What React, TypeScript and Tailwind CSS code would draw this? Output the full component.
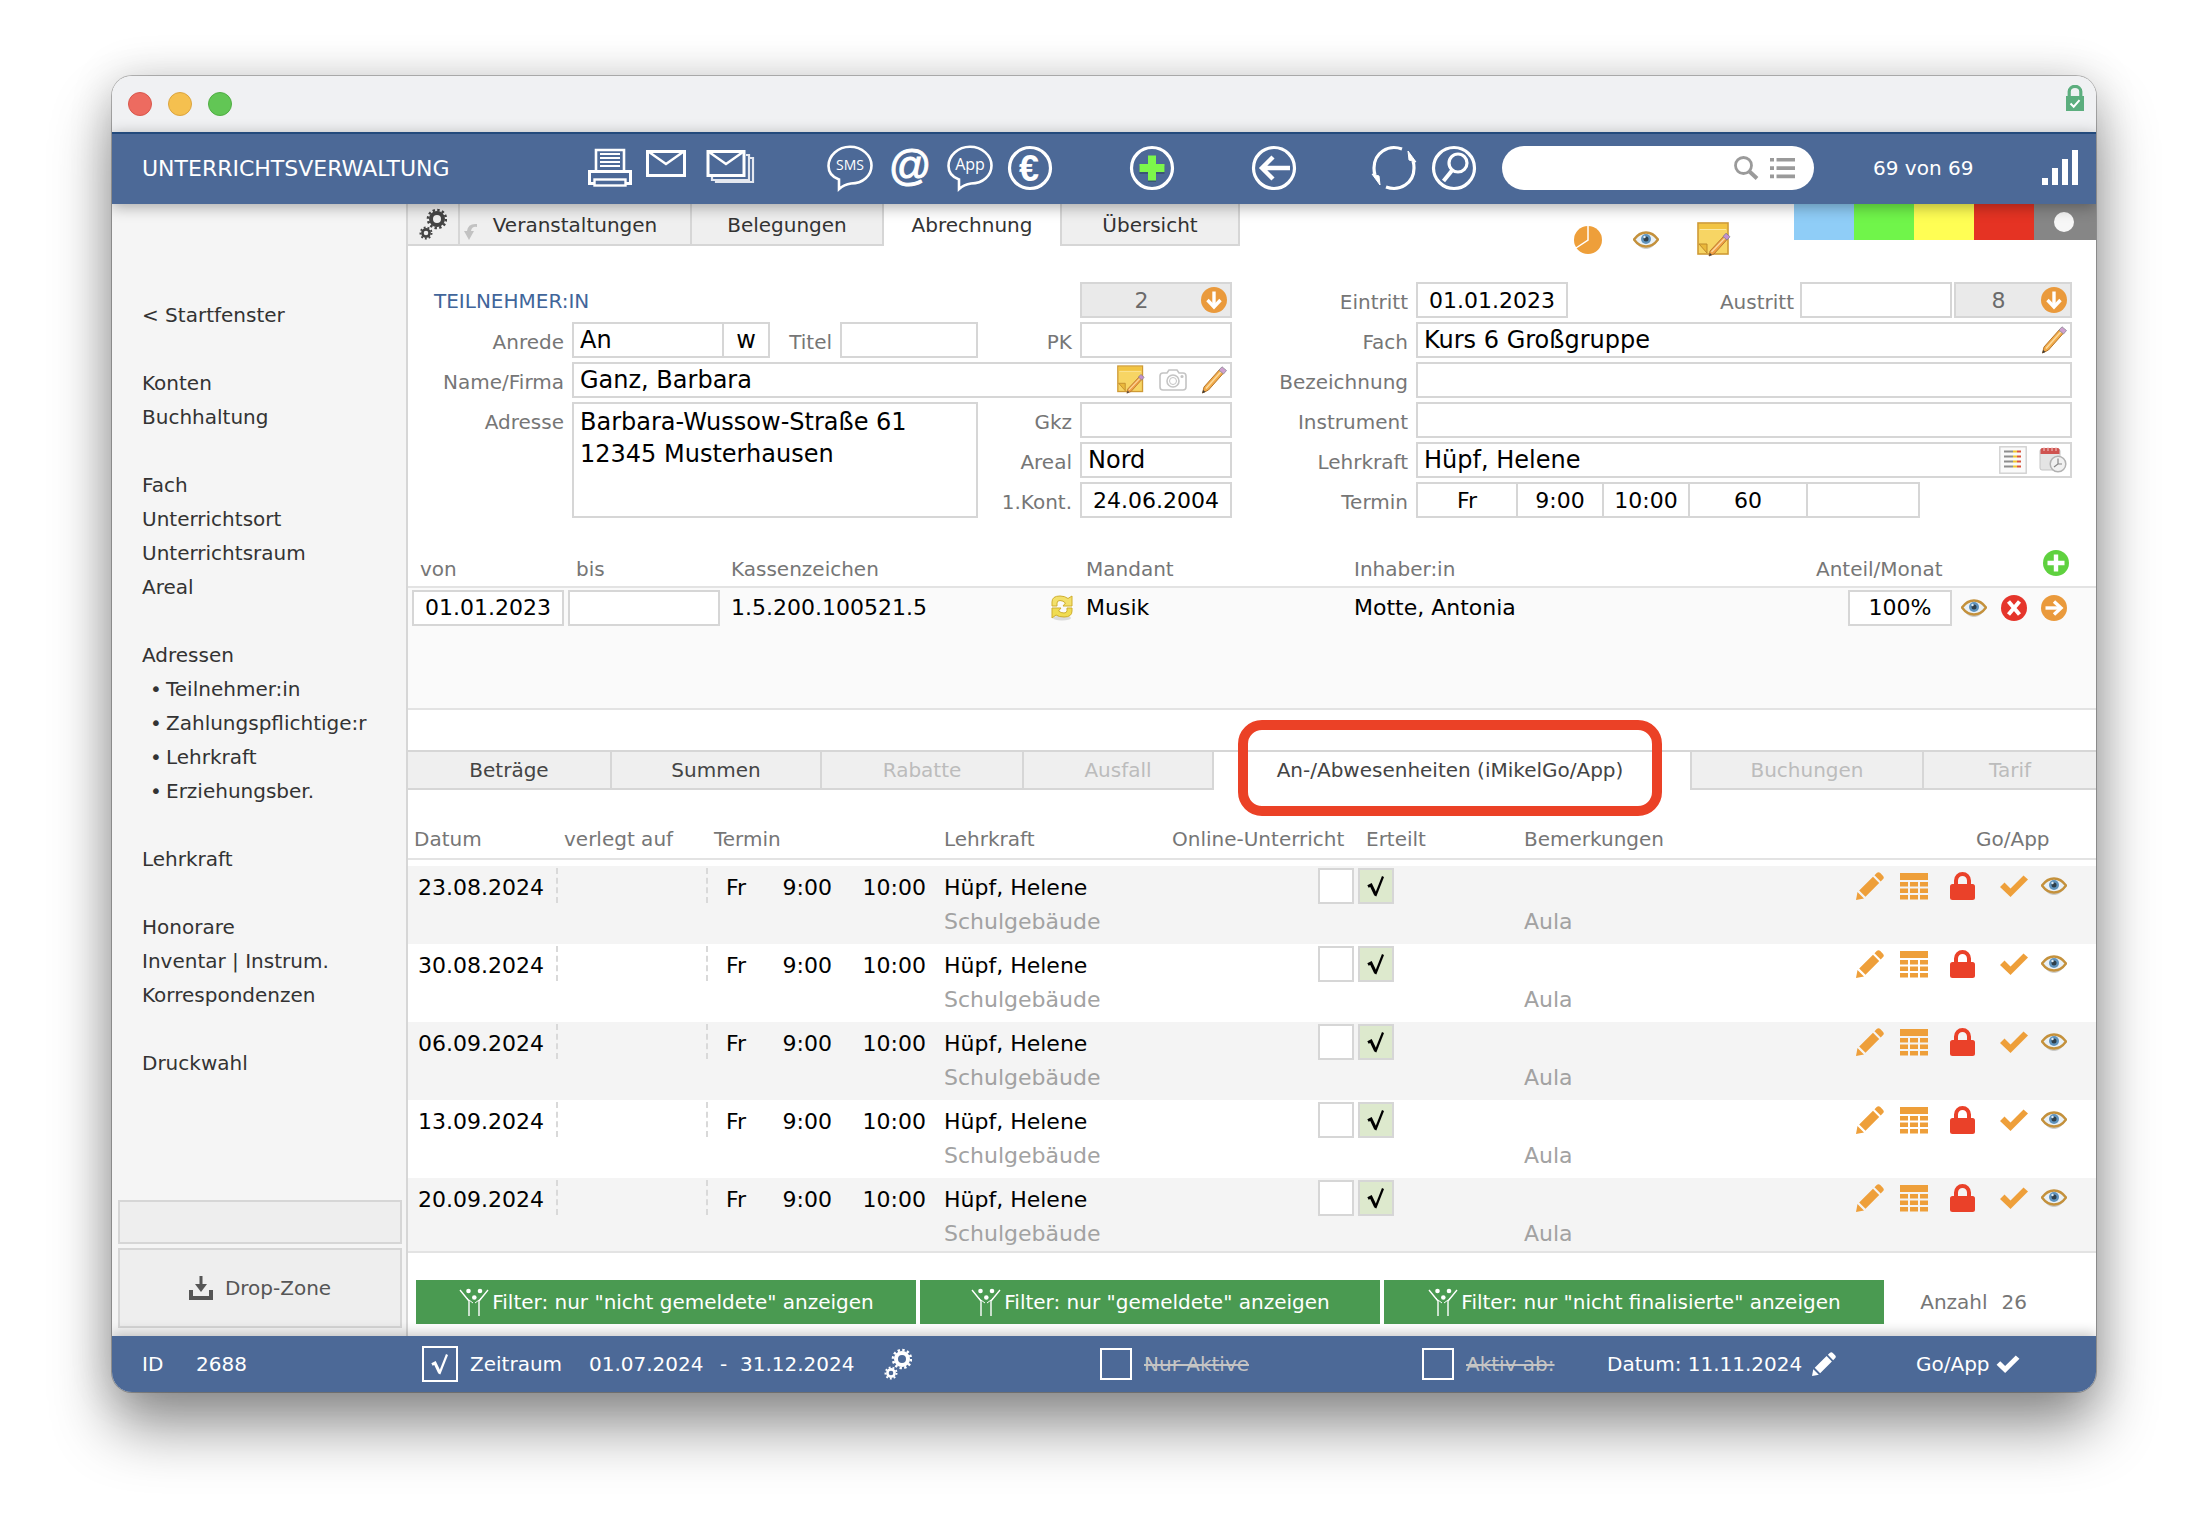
import React from 'react';

const ORANGE = '#ee9f3a';

/* ---------- small drawings ---------- */

function Gears({ color, className }: { color: string; className: string }) {
  return (
    <svg viewBox="0 0 28 34" className={className} fill="none" stroke={color} aria-hidden="true">
      <circle cx="18" cy="12" r="6" strokeWidth="4" />
      <circle cx="18" cy="12" r="9" strokeWidth="2.6" strokeDasharray="2.4 2.31" />
      <circle cx="7" cy="26" r="3.6" strokeWidth="2.6" />
      <circle cx="7" cy="26" r="5.6" strokeWidth="1.8" strokeDasharray="1.9 2" />
    </svg>
  );
}

function Eye() {
  return (
    <svg viewBox="0 0 26 18" className="h-[18px] w-[26px]" aria-hidden="true">
      <path d="M1 9.500C5 4 9 2 13 2s8 2 12 7.500C21 15.500 17 18 13 18S5 15.500 1 9.500z" fill="#9a9a94" opacity=".45" />
      <path d="M1 8.500C5 3 9 1.500 13 1.500s8 1.500 12 7C21 14 17 15.500 13 15.500S5 14 1 8.500z" fill="#e9f1f7" stroke="#c4913c" strokeWidth="2.400" />
      <circle cx="13" cy="8" r="5" fill="#5f93bd" />
      <circle cx="13" cy="8" r="2.500" fill="#2f3f4a" />
      <circle cx="11.500" cy="6" r="1.200" fill="#dcebf5" />
    </svg>
  );
}

function NotePencil({ className }: { className: string }) {
  return (
    <svg viewBox="0 0 34 36" className={className} aria-hidden="true">
      <rect x="1" y="1" width="30" height="31" fill="#f7d564" stroke="#cf9a35" strokeWidth="1.600" />
      <rect x="2" y="2" width="28" height="5" fill="#f2c443" />
      <path d="M3 7.500h26" stroke="#fbe9a2" />
      <path d="M2 22h8v9z" fill="#eab83b" stroke="#bf8a2b" />
      <path d="M13 29l14-15 3.500 3L17 32l-5 2z" fill="#f0a044" stroke="#a9682a" strokeWidth=".8" />
      <path d="M14.500 30L28.500 15.500" stroke="#fbd9a2" strokeWidth="1.300" />
      <path d="M26 14.500l3-3.300 4 3.500-3 3.300z" fill="#c38fd0" stroke="#7f7f8a" strokeWidth=".8" />
      <path d="M12 34l1-3 2 2z" fill="#444" />
    </svg>
  );
}

function ColorPencil() {
  return (
    <svg viewBox="0 0 26 28" className="h-7 w-[26px]" aria-hidden="true">
      <path d="M3 21L19 3l4 3.500L7.500 24 1.500 27z" fill="#f2ab4a" stroke="#b5762c" />
      <path d="M5 22.500L21 4.500" stroke="#fbdca0" strokeWidth="1.500" />
      <path d="M18 4l3-3.200 4.500 3.700L22.500 8z" fill="#cfa0cf" stroke="#8b8b94" strokeWidth=".8" />
      <path d="M1.200 27.200l1-3.200 2.300 2z" fill="#3c3c3c" />
    </svg>
  );
}

function Camera() {
  return (
    <svg viewBox="0 0 28 22" className="h-[22px] w-7" fill="none" stroke="#c4c4c4" strokeWidth="1.600" aria-hidden="true">
      <path d="M4 4h4l2-3h8l2 3h4q3 0 3 3v11q0 3-3 3H4q-3 0-3-3V7q0-3 3-3z" />
      <circle cx="14" cy="12" r="6" />
      <circle cx="14" cy="12" r="3.500" strokeWidth="1" />
      <circle cx="23" cy="7.500" r=".8" />
    </svg>
  );
}

function CircleArrow({ dir }: { dir: 'down' | 'right' }) {
  return (
    <svg viewBox="0 0 26 26" className="size-[26px]" aria-hidden="true">
      <circle cx="13" cy="13" r="13" fill="#ea9a3c" />
      <g transform={dir === 'right' ? 'rotate(-90 13 13)' : undefined} fill="none" stroke="#fff" strokeWidth="3.400">
        <path d="M13 4.500v15" />
        <path d="M6.500 13l6.500 7 6.500-7" />
      </g>
    </svg>
  );
}

function CirclePlus() {
  return (
    <svg viewBox="0 0 26 26" className="size-[26px]" aria-hidden="true">
      <circle cx="13" cy="13" r="13" fill="#5fd13f" />
      <path d="M13 4.500v17M4.500 13h17" stroke="#fff" strokeWidth="4.400" />
    </svg>
  );
}

function CircleX() {
  return (
    <svg viewBox="0 0 26 26" className="size-[26px]" aria-hidden="true">
      <circle cx="13" cy="13" r="13" fill="#e5352b" />
      <path d="M7.500 6.500l11 13M18.500 6.500l-11 13" stroke="#fff" strokeWidth="4" />
    </svg>
  );
}

function SyncGold() {
  return (
    <svg viewBox="0 0 24 26" className="h-[26px] w-6" aria-hidden="true">
      <ellipse cx="12" cy="23" rx="9" ry="2.500" fill="#bbb" opacity=".5" />
      <path d="M2 11V7q0-6 8-6 5 0 8 2.500L22 1v10h-9l2.500-3Q13 5.500 10 5.500 7 5.500 7 8v3z" fill="#f3e06a" stroke="#cfae2e" />
      <path d="M22 13v3q0 6-8 6-5 0-8-2L2 23V13h9l-2.500 3Q11 18 14 18q3 0 3-2.500V13z" fill="#f0dc52" stroke="#cfae2e" />
    </svg>
  );
}

function ListDoc() {
  return (
    <svg viewBox="0 0 28 28" className="size-7" aria-hidden="true">
      <rect x=".8" y=".8" width="26.400" height="26.400" fill="#fafafa" stroke="#d0d0d0" strokeWidth="1.400" />
      {[5.5, 10.5, 15.5, 20.5].map((y) => (
        <g key={y} strokeWidth="2">
          <path d={`M5 ${y}h9`} stroke="#8d8d8d" />
          <path d={`M14 ${y}h4`} stroke="#f0c833" />
          <path d={`M18 ${y}h4`} stroke="#d9543c" />
        </g>
      ))}
    </svg>
  );
}

function CalendarClock() {
  return (
    <svg viewBox="0 0 28 26" className="h-[26px] w-7" aria-hidden="true">
      <rect x="1" y="2" width="20" height="21" rx="2" fill="#e4e4e4" stroke="#c4c4c4" />
      <path d="M1.500 7V3q0-2 2-2h15q2 0 2 2v4z" fill="#cf5350" />
      <path d="M5 0v4M9 0v4M13 0v4M17 0v4" stroke="#f3c9c7" strokeWidth="1" />
      <circle cx="19" cy="17" r="7.800" fill="#f1f1f1" stroke="#b2b2b2" strokeWidth="1.500" />
      <path d="M19 11.500V17l-4 3M19 17h4" fill="none" stroke="#888" strokeWidth="1.200" />
    </svg>
  );
}

function Pencil({ color, className }: { color: string; className: string }) {
  return (
    <svg viewBox="0 0 28 28" className={className} fill={color} aria-hidden="true">
      <path d="M0 28l1.500-8 6.500 6.500zM3.200 18.500L17 4.800l6.200 6.200L9.500 24.800zM18.500 3.300l2.200-2.200q1.800-1.800 3.600 0l2.600 2.600q1.800 1.800 0 3.600l-2.200 2.200z" />
    </svg>
  );
}

function TableIcon() {
  return (
    <svg viewBox="0 0 28 27" className="h-[27px] w-7" fill={ORANGE} aria-hidden="true">
      <rect width="28" height="7" />
      {[9, 15.5, 22].map((y) => (
        <g key={y}>
          <rect x="0" y={y} width="8" height="4.500" />
          <rect x="10" y={y} width="8" height="4.500" />
          <rect x="20" y={y} width="8" height="4.500" />
        </g>
      ))}
    </svg>
  );
}

function Lock() {
  return (
    <svg viewBox="0 0 25 28" className="h-7 w-[25px]" aria-hidden="true">
      <path d="M6 14V8.500a6.500 6.500 0 0 1 13 0V14" fill="none" stroke="#ea4129" strokeWidth="4" />
      <rect y="12" width="25" height="16" rx="2.500" fill="#ea4129" />
    </svg>
  );
}

function Tick({ color, className }: { color: string; className: string }) {
  return (
    <svg viewBox="0 0 28 22" className={className} fill={color} aria-hidden="true">
      <path d="M0 12l4.500-4.500 6 6L23.500.5l4.500 4L10.500 22z" />
    </svg>
  );
}

function People() {
  return (
    <svg viewBox="0 0 32 30" className="h-[30px] w-8" fill="none" stroke="#fff" strokeWidth="1.400" aria-hidden="true">
      <path d="M2 3l9 11v15M30 3l-9 11v15" />
      <path d="M11 14l-2-3M21 14l2-3M11 13l4 3M21 13l-4 3" strokeWidth="1" />
      <g fill="#fff" stroke="none">
        <circle cx="10.500" cy="4" r="2.300" />
        <circle cx="22" cy="4" r="2.300" />
        <circle cx="16.300" cy="10.500" r="2.300" />
      </g>
    </svg>
  );
}

function RootCheck({ color }: { color: string }) {
  return (
    <svg viewBox="0 0 20 22" className="pointer-events-none z-10 h-[22px] w-5 place-self-center [grid-area:1/1]" fill="none" stroke={color} aria-hidden="true">
      <path d="M2 11.500l3-1.500 4.500 9.500" strokeWidth="3" />
      <path d="M9.300 21L17 1.500" strokeWidth="2.200" />
    </svg>
  );
}

/* ---------- toolbar ---------- */

function ToolButton({ label, children }: { label: string; children: React.ReactNode }) {
  return (
    <button type="button" aria-label={label} title={label} className="h-12 w-[60px] shrink-0">
      <svg viewBox="0 0 60 48" className="h-12 w-[60px] overflow-visible" fill="none" stroke="#fff" strokeWidth="3.200">
        {children}
      </svg>
    </button>
  );
}

const BUBBLE = 'M19 45V35.500C12 33 8.500 28 8.500 22C8.500 11.500 18 2.700 30 2.700S51.500 11.500 51.500 21.500S43 39.500 31 39.500Q24 40.500 19 45z';

function Toolbar() {
  return (
    <header className="relative z-20 flex h-[72px] items-center bg-[#4c6997] pl-[30px] pr-[18px] text-white shadow-[inset_0_2px_0_#234a7c,0_3px_14px_rgba(0,0,0,0.32)]">
      <h1 className="w-[438px] shrink-0 text-[22px]">UNTERRICHTSVERWALTUNG</h1>
      <ToolButton label="Drucken">
        <path d="M16 26V6h28v20" strokeWidth="2.600" />
        <path d="M20 10h20M20 14h20M20 18h20M20 22h20" strokeWidth="1.800" />
        <path d="M14 39.500H9.500V27.500h41v12H46" strokeWidth="3" />
        <rect x="14.500" y="35.500" width="31" height="6" strokeWidth="2.400" />
      </ToolButton>
      <ToolButton label="E-Mail">
        <rect x="7.500" y="7.500" width="37" height="24" strokeWidth="3" />
        <path d="M9 8l17 12L43 8" strokeWidth="2.400" />
      </ToolButton>
      <ToolButton label="Serien-E-Mail">
        <path d="M46 11h3v25H12v-3M49 14h4v24H16v-3" strokeWidth="2.200" opacity=".85" />
        <rect x="8" y="7.500" width="36" height="24" strokeWidth="3" />
        <path d="M9 8l17 12L43 8" strokeWidth="2.400" />
      </ToolButton>
      <div className="w-[60px] shrink-0" />
      <ToolButton label="SMS">
        <path d={BUBBLE} strokeWidth="2.600" />
        <text x="30" y="26" textAnchor="middle" fill="#fff" stroke="none" fontSize="14" fontFamily="Open Sans, sans-serif">SMS</text>
      </ToolButton>
      <ToolButton label="Nachricht">
        <text x="30" y="36" textAnchor="middle" fill="#fff" stroke="#fff" strokeWidth="1" fontSize="42" fontFamily="Liberation Sans, sans-serif">@</text>
      </ToolButton>
      <ToolButton label="App">
        <path d={BUBBLE} strokeWidth="2.600" />
        <text x="30" y="26" textAnchor="middle" fill="#fff" stroke="none" fontSize="16" fontFamily="Open Sans, sans-serif">App</text>
      </ToolButton>
      <ToolButton label="Zahlungen">
        <circle cx="30" cy="24" r="20.500" />
        <text x="29" y="36.500" textAnchor="middle" fill="#fff" stroke="none" fontSize="36" fontWeight="700" fontFamily="Liberation Sans, sans-serif">€</text>
      </ToolButton>
      <div className="w-[62px] shrink-0" />
      <ToolButton label="Neu">
        <circle cx="30" cy="24" r="20.500" />
        <path d="M30 13v25M17.500 26h25" stroke="#2f4a5e" strokeWidth="8" opacity=".6" />
        <path d="M30 11.500v25M17.500 24h25" stroke="#7cf74b" strokeWidth="8" />
      </ToolButton>
      <div className="w-[62px] shrink-0" />
      <ToolButton label="Zurück">
        <circle cx="30" cy="24" r="20.500" />
        <path d="M46 24H17M29 13L18 24l11 11" strokeWidth="4.400" />
      </ToolButton>
      <div className="w-[60px] shrink-0" />
      <ToolButton label="Aktualisieren">
        <path d="M38 5C24 0 10 9 10 24Q10 28 11 31M22 43C36 48 50 39 50 24Q50 20 49 17" />
        <path d="M8 30l7 2 1 9zM52 18l-7-2-1-9z" fill="#fff" strokeWidth="1" />
      </ToolButton>
      <ToolButton label="Suchen">
        <circle cx="30" cy="24" r="20.500" />
        <circle cx="34" cy="19" r="9" />
        <path d="M28 26.500L19.500 37" strokeWidth="4" />
      </ToolButton>
      <div className="ml-[18px] flex h-11 min-w-[120px] flex-1 items-center rounded-full bg-white pl-5 pr-[19px]">
        <input type="search" aria-label="Schnellsuche" className="min-w-0 flex-1 bg-transparent text-[20px] text-black outline-none" />
        <button type="button" aria-label="Suche starten">
          <svg viewBox="0 0 25 24" className="h-6 w-[25px]" fill="none" stroke="#9a9a9a">
            <circle cx="9.500" cy="9.500" r="8" strokeWidth="2.800" />
            <path d="M15.500 15.500l7.500 7" strokeWidth="4" />
          </svg>
        </button>
        <button type="button" aria-label="Suchliste" className="ml-[11px]">
          <svg viewBox="0 0 25 22" className="h-[22px] w-[25px]" fill="#9a9a9a">
            <path d="M0 1h4v3.600H0zM6.500 1H25v3.600H6.500zM0 9.300h4v3.600H0zM6.500 9.300H25v3.600H6.500zM0 17.600h4v3.600H0zM6.500 17.600H25v3.600H6.500z" />
          </svg>
        </button>
      </div>
      <p className="ml-[59px] w-[169px] shrink-0 text-[20px]">69 von 69</p>
      <svg viewBox="0 0 36 36" className="size-9 shrink-0" fill="#fff" aria-hidden="true">
        <path d="M0 28h6v7H0zM10 18h6v17h-6zM20 9h6v26h-6zM30 0h6v35h-6z" />
      </svg>
    </header>
  );
}

/* ---------- sidebar ---------- */

const MENU: string[][] = [
  ['< Startfenster'],
  ['Konten', 'Buchhaltung'],
  ['Fach', 'Unterrichtsort', 'Unterrichtsraum', 'Areal'],
  ['Adressen', '• Teilnehmer:in', '• Zahlungspflichtige:r', '• Lehrkraft', '• Erziehungsber.'],
  ['Lehrkraft'],
  ['Honorare', 'Inventar | Instrum.', 'Korrespondenzen'],
  ['Druckwahl'],
];

function Sidebar() {
  return (
    <aside className="flex w-[296px] shrink-0 flex-col border-r-2 border-[#d6d6d6] bg-[#f5f5f5]">
      <nav className="flex flex-col gap-[34px] pl-[30px] pt-[94px] text-[20px] leading-[34px] text-[#333]">
        {MENU.map((group) => (
          <ul key={group[0]}>
            {group.map((item) => {
              const bullet = item.startsWith('•');
              return (
                <li key={item} className={bullet ? 'flex pl-2' : ''}>
                  {bullet && <span className="w-4">•</span>}
                  <a href="#" className="whitespace-nowrap">{bullet ? item.slice(2) : item}</a>
                </li>
              );
            })}
          </ul>
        ))}
      </nav>
      <div className="mt-auto flex flex-col gap-1 px-1.5 pb-2 pr-1">
        <div className="h-11 border-2 border-[#d6d6d6] bg-[#eee]" />
        <button type="button" className="flex h-20 items-center justify-center gap-3 border-2 border-[#d6d6d6] bg-[#eee] text-[20px] text-[#555]">
          <svg viewBox="0 0 24 24" className="size-6" aria-hidden="true">
            <path d="M2 14v8h20v-8" fill="none" stroke="#555" strokeWidth="4" />
            <path d="M10.500 0h3v8H18l-6 8-6-8h4.500z" fill="#555" />
          </svg>
          Drop-Zone
        </button>
      </div>
    </aside>
  );
}

/* ---------- form ---------- */

const FRAME = 'h-9 border-2 border-[#d6d6d6] bg-white text-black outline-none';
const BOX = `${FRAME} text-[22px]`;
const TEXT_BOX = `${FRAME} text-[24px]`;

function Label({ id, className, children }: { id: string; className: string; children: string }) {
  return (
    <label htmlFor={id} className={`h-9 shrink-0 whitespace-nowrap text-right text-[20px] leading-[40px] text-[#767676] ${className}`}>
      {children}
    </label>
  );
}

function CountButton({ value, className }: { value: string; className: string }) {
  return (
    <button type="button" className={`flex h-9 shrink-0 items-center border-2 border-[#d6d6d6] bg-[#eaeaea] pr-[3px] text-[22px] text-[#6b6b6b] ${className}`}>
      <span className="flex-1">{value}</span>
      <CircleArrow dir="down" />
    </button>
  );
}

function ParticipantForm() {
  return (
    <section className="flex min-w-0 flex-col gap-1">
      <div className="flex h-9 justify-between">
        <h2 className="pl-[26px] text-[20px] leading-[38px] text-[#41659a]">TEILNEHMER:IN</h2>
        <CountButton value="2" className="w-[152px]" />
      </div>
      <div className="flex">
        <Label id="anrede" className="w-[164px] pr-2">Anrede</Label>
        <input id="anrede" defaultValue="An" className={`${TEXT_BOX} w-[150px] shrink-0 border-r-0 px-1.5`} />
        <input aria-label="Geschlecht" defaultValue="w" className={`${TEXT_BOX} w-12 shrink-0 px-0 text-center`} />
        <Label id="titel" className="w-[70px] pr-2">Titel</Label>
        <input id="titel" className={`${TEXT_BOX} min-w-0 flex-1 px-1.5`} />
        <Label id="pk" className="w-[102px] pr-2">PK</Label>
        <input id="pk" className={`${TEXT_BOX} w-[152px] shrink-0 px-1.5`} />
      </div>
      <div className="flex">
        <Label id="name" className="w-[164px] pr-2">Name/Firma</Label>
        <div className={`${TEXT_BOX} flex min-w-0 flex-1 items-center pr-[3px]`}>
          <input id="name" defaultValue="Ganz, Barbara" className="h-8 min-w-0 flex-1 px-1.5 outline-none" />
          <button type="button" aria-label="Notiz"><NotePencil className="h-[30px] w-7" /></button>
          <button type="button" aria-label="Foto" className="ml-3.5"><Camera /></button>
          <button type="button" aria-label="Name bearbeiten" className="ml-3.5"><ColorPencil /></button>
        </div>
      </div>
      <div className="flex">
        <Label id="adresse" className="w-[164px] pr-2">Adresse</Label>
        <textarea
          id="adresse"
          defaultValue={'Barbara-Wussow-Straße 61\n12345 Musterhausen'}
          className="h-[116px] min-w-0 flex-1 resize-none border-2 border-[#d6d6d6] px-1.5 py-0.5 text-[24px] leading-8 text-black outline-none"
        />
        <div className="flex flex-col gap-1">
          <div className="flex">
            <Label id="gkz" className="w-[102px] pr-2">Gkz</Label>
            <input id="gkz" className={`${TEXT_BOX} w-[152px] px-1.5`} />
          </div>
          <div className="flex">
            <Label id="areal" className="w-[102px] pr-2">Areal</Label>
            <input id="areal" defaultValue="Nord" className={`${TEXT_BOX} w-[152px] px-1.5`} />
          </div>
          <div className="flex">
            <Label id="kont" className="w-[102px] pr-2">1.Kont.</Label>
            <input id="kont" defaultValue="24.06.2004" className={`${BOX} w-[152px] text-center`} />
          </div>
        </div>
      </div>
    </section>
  );
}

const TERMIN = [
  { label: 'Wochentag', value: 'Fr', width: 'w-[102px] border-l-2' },
  { label: 'Beginn', value: '9:00', width: 'w-[86px]' },
  { label: 'Ende', value: '10:00', width: 'w-[86px]' },
  { label: 'Dauer', value: '60', width: 'w-[118px]' },
  { label: 'Zusatz', value: '', width: 'w-[112px]' },
];

function CourseForm() {
  return (
    <section className="flex min-w-0 flex-col gap-1">
      <div className="flex">
        <Label id="eintritt" className="w-[184px] pr-2">Eintritt</Label>
        <input id="eintritt" defaultValue="01.01.2023" className={`${BOX} w-[152px] text-center`} />
        <Label id="austritt" className="ml-auto pr-1.5">Austritt</Label>
        <input id="austritt" className={`${BOX} w-[152px] px-1.5`} />
        <CountButton value="8" className="ml-0.5 w-[118px]" />
      </div>
      <div className="flex">
        <Label id="fach" className="w-[184px] pr-2">Fach</Label>
        <div className={`${TEXT_BOX} flex min-w-0 flex-1 items-center pr-[3px]`}>
          <input id="fach" defaultValue="Kurs 6 Großgruppe" className="h-8 min-w-0 flex-1 px-1.5 outline-none" />
          <button type="button" aria-label="Fach bearbeiten"><ColorPencil /></button>
        </div>
      </div>
      <div className="flex">
        <Label id="bez" className="w-[184px] pr-2">Bezeichnung</Label>
        <input id="bez" className={`${TEXT_BOX} min-w-0 flex-1 px-1.5`} />
      </div>
      <div className="flex">
        <Label id="instr" className="w-[184px] pr-2">Instrument</Label>
        <input id="instr" className={`${TEXT_BOX} min-w-0 flex-1 px-1.5`} />
      </div>
      <div className="flex">
        <Label id="lehr" className="w-[184px] pr-2">Lehrkraft</Label>
        <div className={`${TEXT_BOX} flex min-w-0 flex-1 items-center pr-[3px]`}>
          <input id="lehr" defaultValue="Hüpf, Helene" className="h-8 min-w-0 flex-1 px-1.5 outline-none" />
          <button type="button" aria-label="Liste"><ListDoc /></button>
          <button type="button" aria-label="Kalender" className="ml-3"><CalendarClock /></button>
        </div>
      </div>
      <div className="flex">
        <Label id="termin0" className="w-[184px] pr-2">Termin</Label>
        {TERMIN.map((t, i) => (
          <input
            key={t.label}
            id={`termin${i}`}
            aria-label={t.label}
            defaultValue={t.value}
            className={`h-9 border-y-2 border-r-2 border-[#d6d6d6] bg-white text-center text-[22px] text-black outline-none ${t.width}`}
          />
        ))}
      </div>
    </section>
  );
}

/* ---------- tabs ---------- */

function TopTabs() {
  const idle = 'h-[42px] border-b-2 border-r-2 border-[#d6d6d6] bg-[#efefef] pt-0.5';
  return (
    <div className="flex items-start justify-between">
      <div className="flex text-[20px] text-[#333]">
        <button type="button" aria-label="Einstellungen" className={`flex w-[52px] justify-center ${idle}`}>
          <Gears color="#444" className="h-9 w-7" />
        </button>
        <button type="button" className={`relative w-[232px] ${idle}`}>
          <svg viewBox="0 0 16 18" className="absolute bottom-1 left-1 h-[18px] w-4" fill="#c2c2c2" aria-hidden="true">
            <path d="M0 9h3Q4 1 13 2v3Q8 4 7 9h3l-5 9z" />
          </svg>
          Veranstaltungen
        </button>
        <button type="button" className={`w-[192px] ${idle}`}>Belegungen</button>
        <button type="button" className="h-10 w-44 bg-white pt-0.5">Abrechnung</button>
        <button type="button" className={`w-[180px] border-l-2 ${idle}`}>Übersicht</button>
      </div>
      <div className="flex">
        <div className="mr-[63px] mt-[18px] flex h-9 items-center">
          <button type="button" aria-label="Statistik">
            <svg viewBox="0 0 28 28" className="size-7" aria-hidden="true">
              <circle cx="14" cy="14" r="14" fill={ORANGE} />
              <path d="M14 0v14L2 22" fill="none" stroke="#fff" strokeWidth="1.500" />
            </svg>
          </button>
          <button type="button" aria-label="Ansicht" className="ml-[31px]"><Eye /></button>
          <button type="button" aria-label="Notiz anlegen" className="ml-[38px]"><NotePencil className="h-9 w-[34px]" /></button>
        </div>
        <div className="flex h-9">
          <button type="button" aria-label="Blau" className="w-[60px] bg-[#8fcdf7]" />
          <button type="button" aria-label="Grün" className="w-[60px] bg-[#70f54a]" />
          <button type="button" aria-label="Gelb" className="w-[60px] bg-[#fffe54]" />
          <button type="button" aria-label="Rot" className="w-[60px] bg-[#e53323]" />
          <button type="button" aria-label="Ohne Farbe" className="grid w-[62px] place-items-center bg-[#868686] pr-0.5">
            <span className="size-5 rounded-full bg-[#f7f7f7]" />
          </button>
        </div>
      </div>
    </div>
  );
}

function DetailTabs() {
  const idle = 'h-[38px] border-b-2 border-[#d6d6d6] bg-[#efefef]';
  return (
    <div className="mt-10 flex border-t-2 border-[#d6d6d6] text-[20px] text-[#444]">
      <button type="button" className={`w-[204px] border-r-2 ${idle}`}>Beträge</button>
      <button type="button" className={`w-[210px] border-r-2 ${idle}`}>Summen</button>
      <button type="button" disabled className={`w-[202px] border-r-2 text-[#bcbcbc] ${idle}`}>Rabatte</button>
      <button type="button" disabled className={`w-[190px] border-r-2 text-[#bcbcbc] ${idle}`}>Ausfall</button>
      <div className="relative min-w-[424px] flex-1">
        <button type="button" className="h-9 w-full whitespace-nowrap pr-1">An-/Abwesenheiten (iMikelGo/App)</button>
        <div className="pointer-events-none absolute left-0 right-1 top-[-32px] mx-auto h-24 w-[424px] rounded-[24px] border-[10px] border-[#eb4126]" />
      </div>
      <button type="button" disabled className={`w-[234px] border-x-2 text-[#bcbcbc] ${idle}`}>Buchungen</button>
      <button type="button" disabled className={`w-[172px] text-[#bcbcbc] ${idle}`}>Tarif</button>
    </div>
  );
}

/* ---------- tables ---------- */

function AccountTable() {
  return (
    <div className="mt-[38px] min-h-[154px] border-b-2 border-[#e3e3e3] bg-[#fafafa]">
      <table className="w-full table-fixed border-collapse text-left">
        <colgroup>
          <col className="w-[158px]" />
          <col className="w-[165px]" />
          <col className="w-[355px]" />
          <col className="w-[268px]" />
          <col />
          <col className="w-[256px]" />
        </colgroup>
        <thead className="border-b-2 border-[#e3e3e3] bg-white text-[20px] text-[#767676]">
          <tr className="h-[31px] *:align-top *:font-normal *:leading-[26px]">
            <th className="pl-3">von</th>
            <th className="pl-2.5">bis</th>
            <th>Kassenzeichen</th>
            <th>Mandant</th>
            <th>Inhaber:in</th>
            <th>
              <div className="flex h-[26px] items-center justify-between pr-[27px]">
                <span className="-ml-6">Anteil/Monat</span>
                <button type="button" aria-label="Zeile hinzufügen" className="-mt-3"><CirclePlus /></button>
              </div>
            </th>
          </tr>
        </thead>
        <tbody className="text-[22px] text-black">
          <tr className="h-10 *:align-middle">
            <td className="pl-1"><input aria-label="von" defaultValue="01.01.2023" className={`${BOX} w-[152px] text-center`} /></td>
            <td className="pl-0.5"><input aria-label="bis" className={`${BOX} w-[152px]`} /></td>
            <td className="whitespace-nowrap">
              <div className="flex items-center justify-between pr-3">
                1.5.200.100521.5
                <button type="button" aria-label="Mandant wechseln"><SyncGold /></button>
              </div>
            </td>
            <td>Musik</td>
            <td className="whitespace-nowrap">Motte, Antonia</td>
            <td>
              <div className="flex items-center pl-2">
                <input aria-label="Anteil pro Monat" defaultValue="100%" className={`${BOX} w-[104px] text-center`} />
                <button type="button" aria-label="Anzeigen" className="ml-[9px]"><Eye /></button>
                <button type="button" aria-label="Löschen" className="ml-3.5"><CircleX /></button>
                <button type="button" aria-label="Öffnen" className="ml-3.5"><CircleArrow dir="right" /></button>
              </div>
            </td>
          </tr>
        </tbody>
      </table>
    </div>
  );
}

const DATES = ['23.08.2024', '30.08.2024', '06.09.2024', '13.09.2024', '20.09.2024'];

function LessonTable() {
  return (
    <table className="mt-8 w-full table-fixed border-collapse border-b-2 border-[#e3e3e3] text-left">
      <colgroup>
        <col className="w-[148px]" />
        <col className="w-[152px]" />
        <col className="w-[236px]" />
        <col className="w-[228px]" />
        <col className="w-[184px]" />
        <col className="w-[168px]" />
        <col />
        <col className="w-[240px]" />
      </colgroup>
      <thead className="border-b-2 border-[#e3e3e3] text-[20px] text-[#767676]">
        <tr className="h-[37px] *:whitespace-nowrap *:align-top *:font-normal *:leading-[34px]">
          <th className="pl-1.5">Datum</th>
          <th className="pl-2">verlegt auf</th>
          <th className="pl-1.5">Termin</th>
          <th>Lehrkraft</th>
          <th>Online-Unterricht</th>
          <th className="pl-2.5">Erteilt</th>
          <th>Bemerkungen</th>
          <th className="pl-[120px]">Go/App</th>
        </tr>
      </thead>
      <tbody className="text-[22px] leading-[34px] text-black">
        <tr aria-hidden="true" className="h-[7px]"><td colSpan={8} /></tr>
        {DATES.map((date) => (
          <tr key={date} className="h-[78px] odd:bg-white even:bg-[#f4f4f4] last:h-[71px] *:whitespace-nowrap *:align-top">
            <td className="pl-2.5 pt-[5px]">{date}</td>
            <td className="pt-0.5"><div className="h-[35px] border-x-2 border-dashed border-[#d9d9d9]" /></td>
            <td className="pt-[5px]">
              <div className="flex text-right">
                <span className="w-[38px]">Fr</span>
                <span className="w-[86px]">9:00</span>
                <span className="w-[94px]">10:00</span>
              </div>
            </td>
            <td className="pt-[5px]">Hüpf, Helene<br /><span className="text-[#a2a2a2]">Schulgebäude</span></td>
            <td className="pr-0.5 pt-0.5">
              <input type="checkbox" aria-label={`Online-Unterricht ${date}`} className="ml-auto block size-9 appearance-none border-2 border-[#d6d6d6] bg-white" />
            </td>
            <td className="pl-0.5 pt-0.5">
              <span className="grid w-9">
                <input type="checkbox" defaultChecked aria-label={`Erteilt ${date}`} className="size-9 appearance-none border-2 border-[#d6d6d6] bg-[#dde9cd] [grid-area:1/1]" />
                <RootCheck color="#000" />
              </span>
            </td>
            <td className="pt-[39px] text-[#a2a2a2]">Aula</td>
            <td className="pt-1.5">
              <div className="flex h-7 items-center">
                <button type="button" aria-label="Bearbeiten"><Pencil color={ORANGE} className="size-7" /></button>
                <button type="button" aria-label="Tabelle" className="ml-4"><TableIcon /></button>
                <button type="button" aria-label="Gesperrt" className="ml-[22px]"><Lock /></button>
                <button type="button" aria-label="Gemeldet" className="ml-[25px]"><Tick color={ORANGE} className="h-[22px] w-7" /></button>
                <button type="button" aria-label="Anzeigen" className="ml-[13px]"><Eye /></button>
              </div>
            </td>
          </tr>
        ))}
      </tbody>
    </table>
  );
}

function Filters() {
  const button = 'flex h-11 items-center justify-center gap-0.5 whitespace-nowrap bg-[#4a9a51]';
  return (
    <div className="flex items-center gap-1 pb-3 pl-2 pr-[69px] pt-[27px] text-[20px] text-white">
      <button type="button" className={`w-[500px] ${button}`}><People />Filter: nur "nicht gemeldete" anzeigen</button>
      <button type="button" className={`w-[460px] ${button}`}><People />Filter: nur "gemeldete" anzeigen</button>
      <button type="button" className={`w-[500px] ${button}`}><People />Filter: nur "nicht finalisierte" anzeigen</button>
      <p className="ml-auto flex gap-3.5 text-[#767676]"><span>Anzahl</span><span>26</span></p>
    </div>
  );
}

/* ---------- footer ---------- */

function Footer() {
  return (
    <footer className="relative z-20 flex h-14 items-center whitespace-nowrap bg-[#4c6997] pl-[30px] text-[20px] text-white shadow-[0_-3px_12px_rgba(0,0,0,0.22)]">
      <span className="w-[54px]">ID</span>
      <span className="w-[226px]">2688</span>
      <span className="grid w-9">
        <input id="zeitraum" type="checkbox" defaultChecked className="size-9 appearance-none border-2 border-white [grid-area:1/1]" />
        <RootCheck color="#fff" />
      </span>
      <label htmlFor="zeitraum" className="ml-3 w-[119px]">Zeitraum</label>
      <span className="w-[131px]">01.07.2024</span>
      <span className="w-5">-</span>
      <span className="w-[144px]">31.12.2024</span>
      <button type="button" aria-label="Zeitraum einstellen" className="w-[216px] grow"><Gears color="#fff" className="h-[34px] w-7" /></button>
      <input id="aktive" type="checkbox" className="size-8 appearance-none border-2 border-white" />
      <label htmlFor="aktive" className="ml-3 w-[278px] grow text-[#c4c4c4] line-through">Nur Aktive</label>
      <input id="aktivab" type="checkbox" className="size-8 appearance-none border-2 border-white" />
      <label htmlFor="aktivab" className="ml-3 w-[141px] text-[#c4c4c4] line-through">Aktiv ab:</label>
      <button type="button" className="flex w-[309px] items-center gap-2.5">Datum: 11.11.2024<Pencil color="#fff" className="size-6" /></button>
      <button type="button" className="flex w-[180px] items-center gap-1.5">Go/App<Tick color="#fff" className="h-[18px] w-6" /></button>
    </footer>
  );
}

export default function App() {
  return (
    <div className="min-h-screen bg-white px-28 pb-[148px] pt-[76px] font-['DejaVu_Sans',Verdana,sans-serif]">
      <div className="min-w-[1984px] overflow-hidden rounded-[20px] bg-white shadow-[0_0_0_1px_rgba(0,0,0,0.25),0_36px_60px_rgba(0,0,0,0.42),0_0_44px_rgba(0,0,0,0.16)]">
        <div className="flex h-14 items-center gap-4 bg-[#f0f1f3] pl-4 pr-3">
          <button type="button" aria-label="Schließen" className="size-6 rounded-full border border-[#d8574c] bg-[#ed6b60]" />
          <button type="button" aria-label="Minimieren" className="size-6 rounded-full border border-[#dba43f] bg-[#f5c04f]" />
          <button type="button" aria-label="Vergrößern" className="size-6 rounded-full border border-[#50ad44] bg-[#62c655]" />
          <svg viewBox="0 0 18 26" className="mb-3 ml-auto h-[26px] w-[18px]" aria-hidden="true">
            <path d="M3.200 13V6.500a5.800 5.200 0 0 1 11.600 0V13" fill="none" stroke="#5cae7e" strokeWidth="3.200" />
            <rect y="11" width="18" height="15" fill="#5cae7e" />
            <path d="M4.500 18.500l3.200 3.200 5.800-6.500" fill="none" stroke="#fff" strokeWidth="2" />
          </svg>
        </div>
        <Toolbar />
        <div className="flex">
          <Sidebar />
          <main className="min-w-0 flex-1">
            <TopTabs />
            <div className="mt-6 grid grid-cols-[minmax(0,824fr)_minmax(0,840fr)] pr-6">
              <ParticipantForm />
              <CourseForm />
            </div>
            <AccountTable />
            <DetailTabs />
            <LessonTable />
            <Filters />
          </main>
        </div>
        <Footer />
      </div>
    </div>
  );
}
